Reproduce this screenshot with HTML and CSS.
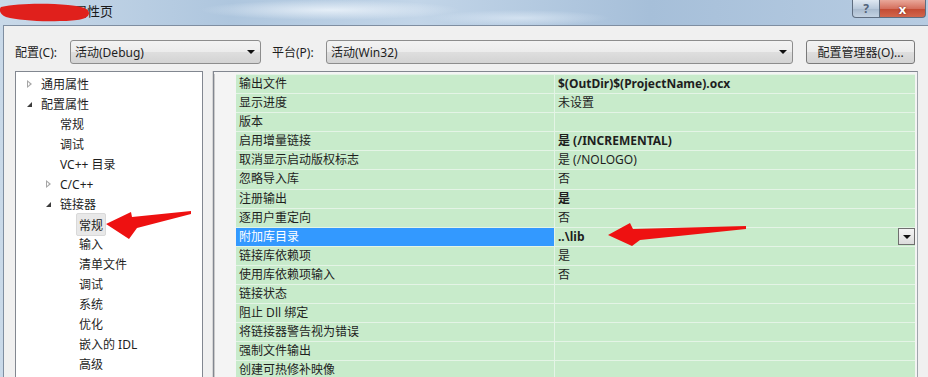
FILE: index.html
```html
<!DOCTYPE html>
<html lang="zh-CN">
<head>
    <meta charset="UTF-8">
    <title>属性页</title>
    <link rel="stylesheet" href="styles.css">
</head>
<body>
    <div class="window">
        <!-- Title Bar -->
        <div class="titlebar">
            <span class="title">属性页</span>
            <svg class="scribble" width="92" height="24" viewBox="0 0 92 24">
                <path d="M1 7 C18 3 48 3 68 5 C80 6 89 8 89 13 C89 19 78 21 60 21 C40 22 18 20 6 17 C-1 14 -1 9 1 7 Z" fill="#e0201c"/>
            </svg>
            <div class="caption-buttons">
                <div class="cap-btn help">?</div>
                <div class="cap-btn close">x</div>
            </div>
        </div>

        <!-- Dialog Body -->
        <div class="frame">
            <div class="toolbar">
                <label class="tb-label">配置(C):</label>
                <div class="combo combo-config">
                    <span>活动(Debug)</span>
                    <i class="combo-arrow"></i>
                </div>
                <label class="tb-label tb-platform">平台(P):</label>
                <div class="combo combo-platform">
                    <span>活动(Win32)</span>
                    <i class="combo-arrow"></i>
                </div>
                <button class="cfg-button">配置管理器(O)...</button>
            </div>

            <div class="panes">
                <!-- Tree -->
                <div class="tree">
                    <div class="node lvl0"><i class="tw closed"></i>通用属性</div>
                    <div class="node lvl0"><i class="tw open"></i>配置属性</div>
                    <div class="node lvl1">常规</div>
                    <div class="node lvl1">调试</div>
                    <div class="node lvl1">VC++ 目录</div>
                    <div class="node lvl1"><i class="tw closed"></i>C/C++</div>
                    <div class="node lvl1"><i class="tw open"></i>链接器</div>
                    <div class="node lvl2"><span class="sel">常规</span></div>
                    <div class="node lvl2">输入</div>
                    <div class="node lvl2">清单文件</div>
                    <div class="node lvl2">调试</div>
                    <div class="node lvl2">系统</div>
                    <div class="node lvl2">优化</div>
                    <div class="node lvl2">嵌入的 IDL</div>
                    <div class="node lvl2">高级</div>
                </div>

                <div class="splitter"></div>

                <!-- Property Grid -->
                <div class="grid">
                    <div class="row"><div class="gutter"></div><div class="name">输出文件</div><div class="value bold">$(OutDir)$(ProjectName).ocx</div></div>
                    <div class="row"><div class="gutter"></div><div class="name">显示进度</div><div class="value">未设置</div></div>
                    <div class="row"><div class="gutter"></div><div class="name">版本</div><div class="value"></div></div>
                    <div class="row"><div class="gutter"></div><div class="name">启用增量链接</div><div class="value bold">是 (/INCREMENTAL)</div></div>
                    <div class="row"><div class="gutter"></div><div class="name">取消显示启动版权标志</div><div class="value">是 (/NOLOGO)</div></div>
                    <div class="row"><div class="gutter"></div><div class="name">忽略导入库</div><div class="value">否</div></div>
                    <div class="row"><div class="gutter"></div><div class="name">注册输出</div><div class="value bold">是</div></div>
                    <div class="row"><div class="gutter"></div><div class="name">逐用户重定向</div><div class="value">否</div></div>
                    <div class="row active"><div class="gutter"></div><div class="name">附加库目录</div><div class="value bold">..\lib<span class="drop-btn"><i></i></span></div></div>
                    <div class="row"><div class="gutter"></div><div class="name">链接库依赖项</div><div class="value">是</div></div>
                    <div class="row"><div class="gutter"></div><div class="name">使用库依赖项输入</div><div class="value">否</div></div>
                    <div class="row"><div class="gutter"></div><div class="name">链接状态</div><div class="value"></div></div>
                    <div class="row"><div class="gutter"></div><div class="name">阻止 Dll 绑定</div><div class="value"></div></div>
                    <div class="row"><div class="gutter"></div><div class="name">将链接器警告视为错误</div><div class="value"></div></div>
                    <div class="row"><div class="gutter"></div><div class="name">强制文件输出</div><div class="value"></div></div>
                    <div class="row"><div class="gutter"></div><div class="name">创建可热修补映像</div><div class="value"></div></div>
                </div>
            </div>
        </div>

        <!-- Red annotation arrows -->
        <svg class="marks" width="928" height="377" viewBox="0 0 928 377">
            <polygon points="106,224 131,212 132,217 191,211 191,214 137,228 129,239" fill="#ee1111"/>
            <polygon points="608,235 630,223 633,229 746,226 746,229 640,240 632,246" fill="#ee1111"/>
        </svg>
    </div>
</body>
</html>
```

FILE: styles.css
```css
/* General */
html, body {
    margin: 0;
    height: 100%;
    overflow: hidden;
}

body {
    font-family: "Noto Sans", "Noto Sans CJK SC", sans-serif;
    font-size: 12px;
    color: #1e1e1e;
    background: linear-gradient(90deg, #c9d9e9 0%, #aec6de 25%, #c2d5e8 45%, #a6bfd9 70%, #b7cce2 100%);
}

.window {
    position: relative;
    height: 100%;
}

/* Title Bar */
.titlebar {
    position: relative;
    display: flex;
    align-items: center;
    height: 25px;
    padding-left: 74px;
    background:
        radial-gradient(ellipse 130px 10px at 330px 10px, rgba(240, 246, 252, 0.8), transparent),
        radial-gradient(ellipse 90px 8px at 520px 18px, rgba(230, 240, 250, 0.6), transparent);
}

.title {
    font-size: 13px;
    color: #1a1a1a;
    margin-top: -4px;
}

.scribble {
    position: absolute;
    left: 0;
    top: 0;
}

.caption-buttons {
    display: flex;
    margin-left: auto;
    margin-right: 2px;
    align-self: flex-start;
}

.cap-btn {
    height: 17px;
    display: flex;
    align-items: center;
    justify-content: center;
    border: 1px solid #5e6d80;
    border-top: none;
    font-weight: bold;
    color: #fff;
}

.cap-btn.help {
    width: 26px;
    border-radius: 0 0 0 4px;
    background: linear-gradient(#dfe8f2, #b9c9db 50%, #a7b9cd 51%, #c3d2e2);
    color: #51637a;
    font-size: 12px;
}

.cap-btn.close {
    width: 45px;
    border-left: none;
    border-radius: 0 0 4px 0;
    background: linear-gradient(#e9a89a, #d5705e 50%, #c24a33 51%, #d2664c);
    font-size: 13px;
    text-shadow: 0 0 2px #5a1a10;
}

/* Dialog Frame */
.frame {
    margin-left: 3px;
    height: calc(100% - 25px);
    box-sizing: border-box;
    background: #f0f0f0;
    border-top: 1px solid #7f8ea1;
    border-left: 1px solid #7f8ea1;
    padding: 14px 0 0 11px;
}

/* Toolbar */
.toolbar {
    display: flex;
    align-items: center;
    height: 24px;
}

.tb-label {
    width: 55px;
    font-size: 12px;
}

.tb-platform {
    margin-left: 11px;
    width: 54px;
}

.combo {
    position: relative;
    display: flex;
    align-items: center;
    height: 24px;
    box-sizing: border-box;
    padding-left: 4px;
    border: 1px solid #8d8d8d;
    border-radius: 3px;
    background: linear-gradient(#f3f3f3, #ececec 48%, #dedede 52%, #d3d3d3);
}

.combo-config { width: 191px; }
.combo-platform { width: 467px; }

.combo-arrow {
    position: absolute;
    right: 5px;
    top: 9px;
    border-left: 4px solid transparent;
    border-right: 4px solid transparent;
    border-top: 4px solid #111;
}

.cfg-button {
    margin-left: 13px;
    width: 109px;
    height: 24px;
    font-family: inherit;
    font-size: 12px;
    color: #1e1e1e;
    border: 1px solid #7a7a7a;
    border-radius: 3px;
    background: linear-gradient(#f3f3f3, #ececec 48%, #dedede 52%, #d3d3d3);
    padding: 0;
}

/* Panes */
.panes {
    display: flex;
    margin-top: 7px;
    height: 320px;
}

.tree {
    width: 188px;
    box-sizing: border-box;
    border: 1px solid #828790;
    border-bottom: none;
    background: #fff;
    padding-top: 2px;
}

.splitter {
    width: 9px;
    border-right: 1px solid #d6d6d6;
}

.node {
    display: flex;
    align-items: center;
    height: 20px;
    position: relative;
    white-space: nowrap;
}

.node.lvl0 { padding-left: 25px; }
.node.lvl1 { padding-left: 44px; }
.node.lvl2 { padding-left: 63px; }

.tw {
    position: absolute;
    top: 6px;
}

.lvl0 .tw { left: 11px; }
.lvl1 .tw { left: 30px; }

.tw.closed {
    width: 0;
    height: 0;
    border-top: 4px solid transparent;
    border-bottom: 4px solid transparent;
    border-left: 5px solid #a6a6a6;
}

.tw.closed::after {
    content: "";
    position: absolute;
    left: -4px;
    top: -2px;
    border-top: 2px solid transparent;
    border-bottom: 2px solid transparent;
    border-left: 2.5px solid #fff;
}

.tw.open {
    top: 8px;
    width: 0;
    height: 0;
    border-left: 5px solid transparent;
    border-bottom: 5px solid #3c3c3c;
}

.sel {
    margin-left: -3px;
    padding: 2px 2px 1px;
    background: #e8e8e8;
    border: 1px solid #d9d9d9;
    border-radius: 2px;
}

/* Property Grid */
.grid {
    width: 705px;
    box-sizing: border-box;
    border-left: 1px solid #828790;
    border-top: 1px solid #828790;
    border-right: 1px solid #a0a6ad;
    background: #f4f4f4;
    padding-top: 2px;
}

.row {
    display: flex;
    height: 19.1px;
}

.gutter {
    width: 21px;
    flex: none;
    border-left: 1px solid #c9c9c9;
}

.name,
.value {
    box-sizing: border-box;
    border-top: 1px solid #e4f4e6;
    background: #c8ebcb;
    padding-left: 3px;
    line-height: 17px;
    white-space: nowrap;
}

.name {
    width: 319px;
    flex: none;
    border-right: 1px solid #e4f4e6;
}

.value {
    flex: 1;
    position: relative;
    margin-right: 2px;
}

.bold { font-weight: bold; }

.row.active .name {
    background: #3399ff;
    color: #fff;
}

.drop-btn {
    position: absolute;
    right: 0;
    top: 0;
    width: 17px;
    height: 17px;
    box-sizing: border-box;
    border: 1px solid #6f6f6f;
    background: linear-gradient(#f4f4f4, #dcdcdc);
}

.drop-btn i {
    position: absolute;
    left: 4px;
    top: 6px;
    border-left: 4px solid transparent;
    border-right: 4px solid transparent;
    border-top: 4px solid #111;
}

/* Annotation overlay */
.marks {
    position: absolute;
    left: 0;
    top: 0;
    pointer-events: none;
}
```
